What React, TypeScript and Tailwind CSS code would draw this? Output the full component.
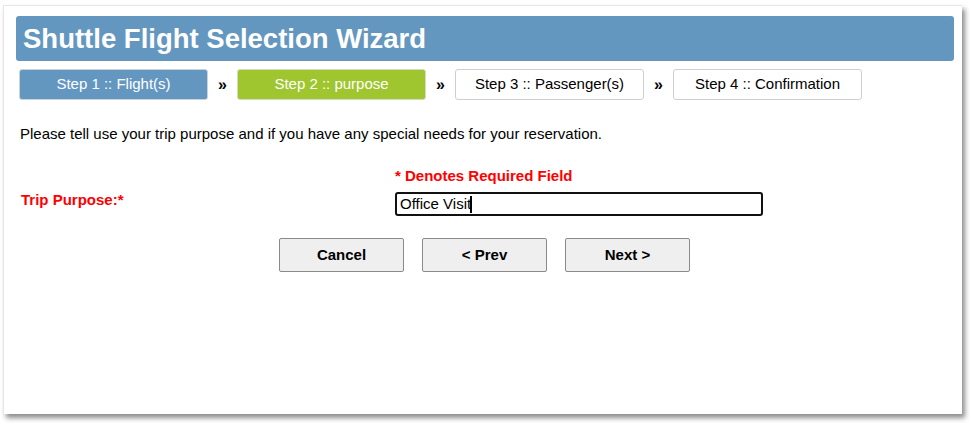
import React from "react";

const steps = [
  { label: "Step 1 :: Flight(s)", cls: "bg-[#6497bf] text-white border-[#c9d3dc]" },
  { label: "Step 2 :: purpose", cls: "bg-[#9fc62e] text-white border-[#d3dcc0]" },
  { label: "Step 3 :: Passenger(s)", cls: "bg-white text-black border-[#cfcfcf]" },
  { label: "Step 4 :: Confirmation", cls: "bg-white text-black border-[#cfcfcf]" },
];

export default function App() {
  return (
    <div className="w-[972px] h-[424px] bg-white font-['Liberation_Sans',Arial,sans-serif] pl-[3px] pt-[5px]">
      <div className="w-[959px] h-[409px] bg-white border-l border-t border-[#e6e6e6] shadow-[3px_4px_5px_rgba(0,0,0,0.45)] pl-[12px] pr-[8px] pt-[10px]">
        <div className="h-[45px] bg-[#6497bf] rounded-[3px] flex items-center pl-[7px]">
          <h1 className="text-white font-bold text-[27.5px] leading-none">Shuttle Flight Selection Wizard</h1>
        </div>

        <div className="flex items-center mt-[8px] pl-[3px]">
          {steps.map((s, i) => (
            <React.Fragment key={s.label}>
              {i > 0 && (
                <span className="w-[29px] text-center text-[16px] font-bold text-black">»</span>
              )}
              <div className={`w-[189px] h-[31px] rounded-[3px] border flex items-center justify-center text-[15px] ${s.cls}`}>
                {s.label}
              </div>
            </React.Fragment>
          ))}
        </div>

        <p className="text-[15px] leading-[17px] text-black mt-[25px] pl-[4px]">
          Please tell use your trip purpose and if you have any special needs for your reservation.
        </p>

        <div className="grid grid-cols-[374px_1fr] mt-[25px] pl-[5px]">
          <div />
          <div className="text-[#ff0000] font-bold text-[15px] leading-[17px]">* Denotes Required Field</div>
          <div className="text-[#ff0000] font-bold text-[15px] flex items-center">Trip Purpose:*</div>
          <div className="mt-[8px]">
            <div className="w-[368px] h-[24px] border-2 border-[#111] rounded-[3px] flex items-center pl-[3px] text-[15px] text-black">
              Office Visit<span className="inline-block w-[2px] h-[17px] bg-black -ml-[1px]" />
            </div>
          </div>
        </div>

        <div className="flex gap-[18px] mt-[22px] pl-[263px]">
          {["Cancel", "< Prev", "Next >"].map((b) => (
            <button
              key={b}
              className="w-[125px] h-[34px] bg-[#efefef] border border-[#8a8a8a] rounded-[2px] font-bold text-[15px] text-black"
            >
              {b}
            </button>
          ))}
        </div>
      </div>
    </div>
  );
}
